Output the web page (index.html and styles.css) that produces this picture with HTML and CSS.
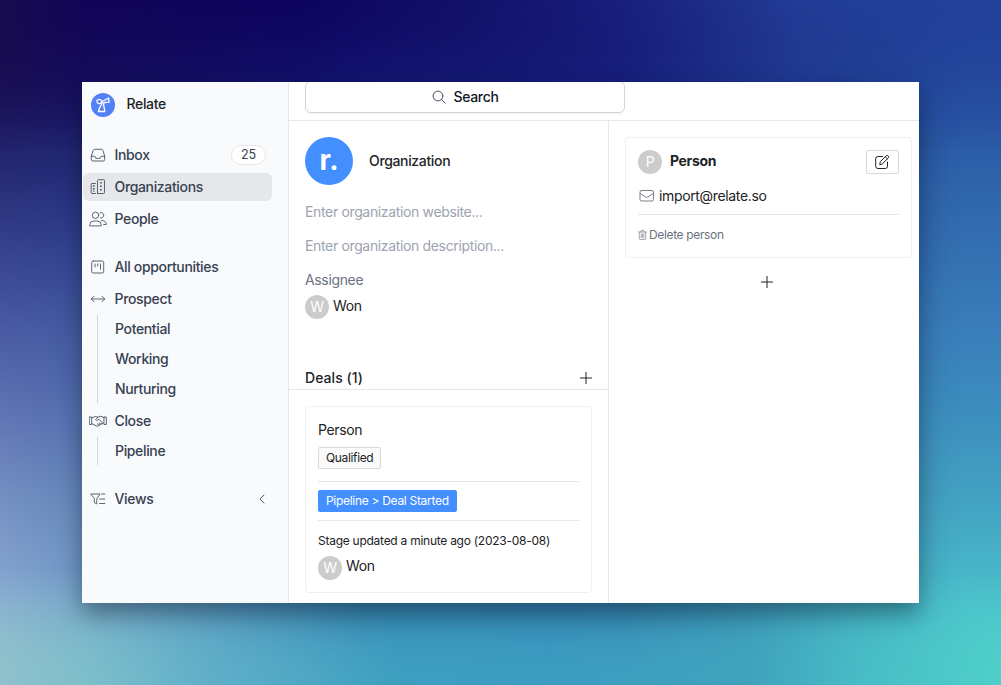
FILE: index.html
```html
<!DOCTYPE html>
<html lang="en">
<head>
<meta charset="utf-8">
<title>Relate</title>
<link rel="stylesheet" href="styles.css">
</head>
<body>
<div class="backdrop"><i class="wash center"></i><i class="wash left"></i><i class="wash top"></i><i class="wash bottom"></i></div>
<div class="window">
  <aside class="sidebar">
    <div class="brand">
      <svg class="brand-logo" viewBox="0 0 24 24"><circle cx="12" cy="12" r="12" fill="#5180f8"/><g fill="none" stroke="#fff" stroke-width="1.35" stroke-linejoin="round" stroke-linecap="round"><path d="M11.300 8.500C10.300 10.200 8.800 11 7.400 10.400 5.700 9.600 5.300 7.700 6.800 6.700c1.500-1 3.200.3 4.500 1.800zM11.300 8.500 17.600 5l.5 4.200-5.200.4M11.300 8.500c.3 3.700-3.500 5.500-3.800 10h6.200c.2-3.700-1.800-5-.8-8.900"/></g></svg>
      <span>Relate</span>
    </div>
    <nav class="nav">
      <div class="group">
        <a class="item"><svg class="icon" viewBox="0 0 18 18"><path d="M2.300 10.300 4 4.600q.4-1.300 1.700-1.300h6.600q1.300 0 1.700 1.300l1.700 5.700v3.200q0 1.500-1.500 1.500H3.800q-1.500 0-1.500-1.500zM2.300 10.300h3.500l1 2h4.400l1-2h3.500"/></svg><span>Inbox</span><span class="count">25</span></a>
        <a class="item active"><svg class="icon" viewBox="0 0 18 18"><path d="M8.500 15.500v-13q0-.8.8-.8h5.400q.8 0 .8.800v12.200q0 .8-.8.800H8.500M6.500 5.500H3q-.8 0-.8.800v8.400q0 .8.800.8h3.500"/><path class="dots" d="M11.900 4v1.600M11.900 7.500v1.600M11.900 11v1.600M4.800 7.300v1.500M4.800 10v1.500M4.800 12.600v1"/></svg><span>Organizations</span></a>
        <a class="item"><svg class="icon" viewBox="0 0 18 18"><circle cx="6.500" cy="5.300" r="3.200"/><path d="M.8 15.500v-1q.2-3.500 4-3.500h3.400q3.800 0 4 3.500v1zM11 2.800a2.700 2.700 0 1 1 .4 5.100M12.500 10.600q4.500-.2 4.700 3.400v.5h-2.500"/></svg><span>People</span></a>
      </div>
      <div class="group">
        <a class="item"><svg class="icon" viewBox="0 0 18 18"><rect x="2.700" y="3" width="12" height="12" rx="1.500"/><path d="M6 6v3M8.700 6v2M11.500 6v5.200"/></svg><span>All opportunities</span></a>
        <a class="item"><svg class="icon" viewBox="0 0 18 18"><path d="M2.300 9h13.400M5 6.300 2.300 9 5 11.700M13 6.300 15.700 9 13 11.700"/></svg><span>Prospect</span></a>
        <div class="sub"><a>Potential</a><a>Working</a><a>Nurturing</a></div>
        <a class="item"><svg class="icon" viewBox="0 0 18 18"><path d="M.7 5h2v7.500h-2zM15.300 5h2v7.500h-2zM2.700 6l3.500-1.500 2.800.7 2.800-1 3.500 1.500M2.700 11.500 7 13.800q1 .7 2 .2l5.200-3M9 5.200 6.500 7.700q.7 1.300 2.300.3l1.200-.6 3.500 3.300q-.2 1.500-1.700 1.300M10 11l1.500 1.200M8.500 12l1.700 1.200"/></svg><span>Close</span></a>
        <div class="sub"><a>Pipeline</a></div>
      </div>
      <div class="group">
        <a class="item"><svg class="icon" viewBox="0 0 18 18"><path d="M2 4h9L7.800 8.700V14L5.300 12.500V8.700zM12.300 4h3.500M10.700 9h5.100M10.700 13.500h5.100"/></svg><span>Views</span><svg class="chevron" viewBox="0 0 10 10"><path d="M7 1 3 5l4 4"/></svg></a>
      </div>
    </nav>
  </aside>
  <main class="main">
    <header class="topbar">
      <button class="search"><svg class="search-icon" viewBox="0 0 14 14"><circle cx="6" cy="6" r="4.900"/><path d="m9.500 9.500 3.700 3.700"/></svg>Search</button>
    </header>
    <div class="columns">
      <section class="organization">
        <div class="org-head"><div class="org-avatar">r.</div><span>Organization</span></div>
        <div class="field placeholder">Enter organization website...</div>
        <div class="field placeholder">Enter organization description...</div>
        <div class="field label">Assignee</div>
        <div class="person"><span class="avatar">W</span><span>Won</span></div>
        <div class="deals-head"><span>Deals (1)</span><svg class="plus" viewBox="0 0 12 12"><path d="M6 0v12M0 6h12"/></svg></div>
        <article class="card deal">
          <div class="deal-name">Person</div>
          <span class="tag">Qualified</span>
          <div class="stage"><span class="tag blue">Pipeline &gt; Deal Started</span></div>
          <div class="updated">Stage updated a minute ago (2023-08-08)</div>
          <div class="person"><span class="avatar">W</span><span>Won</span></div>
        </article>
      </section>
      <section class="contacts">
        <article class="card contact">
          <div class="contact-head"><span class="avatar">P</span><b>Person</b><button class="edit"><svg viewBox="0 0 16 16"><path d="M8.500 2.500H4Q1.700 2.500 1.700 4.800v7.400q0 2.300 2.300 2.300h7.200q2.300 0 2.300-2.300V8M5.800 10.300l.5-2.600 6-6q.8-.7 1.600 0l.5.5q.7.800 0 1.600l-6 6zM11.300 2.700l2.100 2.100"/></svg></button></div>
          <div class="email"><svg class="mail" viewBox="0 0 16 14"><rect x="1" y="1.500" width="13.500" height="10.500" rx="1.500"/><path d="M1.200 4.500 6.800 8q1 .6 2 0l5.500-3.500"/></svg><span>import@relate.so</span></div>
          <div class="delete"><svg class="trash" viewBox="0 0 9 10"><path d="M.3 2h8.400M3 1.800V.6h3v1.200M1.300 2.200v6.500q0 .8.800.8h4.800q.8 0 .8-.8V2.200M3.100 3.800v4M4.500 3.800v4M5.900 3.800v4"/></svg><span>Delete person</span></div>
        </article>
        <div class="add"><svg class="plus" viewBox="0 0 12 12"><path d="M6 0v12M0 6h12"/></svg></div>
      </section>
    </div>
  </main>
</div>
</body>
</html>
```
FILE: styles.css
```css
* { box-sizing: border-box; }
body {
  margin: 0;
  height: 685px;
  padding: 82px;
  overflow: hidden;
  font: 14px/22px Inter, "Liberation Sans", sans-serif;
  letter-spacing: -.35px;
  color: #222326;
}
svg { display: block; flex: none; fill: none; stroke: currentColor; stroke-width: .9; stroke-linecap: round; stroke-linejoin: round; }
button { font: inherit; letter-spacing: inherit; color: inherit; background: #fff; }

/* Desktop colour mesh */
.backdrop {
  position: absolute;
  inset: 0;
  background: linear-gradient(#23409a, #254fa0 12%, #3067ac 29%, #3a80bb 50%, #3b8bbd 58%, #43a2c2 73%, #4abecb 88%, #4ecfca);
}
.wash { position: absolute; inset: 0; }
.center {
  background: linear-gradient(#12126b, #16217d 13%, #2a5b9c 50%, #3076a8 90%, #3b98be);
  mask-image: linear-gradient(90deg, #000 62%, transparent 96%);
}
.left {
  background: linear-gradient(#170a4e, #1b1257 12%, #232670 23%, #36418c 36%, #4a5ba3 48%, #6175b5 61%, #7590c2 73%, #88a8d2 87%, #92c4cf);
  mask-image: linear-gradient(90deg, #000, transparent 36%);
}
.top {
  background: linear-gradient(90deg, #180c50, #120558 8%, #0d0460 30%, #12126b 48%, #191f7d 62%, #223d96 80%, #23429a);
  mask-image: linear-gradient(#000, transparent 22%);
}
.bottom {
  background: linear-gradient(90deg, #8fc0cc, #7dbecb 9%, #62b0c9 20%, #3d9fc0 40%, #3c9dc2 55%, #40a2bc 75%, #48bcc6 86%, #4ecfca);
  mask-image: linear-gradient(0deg, #000, #000c 5%, transparent 17%);
}

.window {
  position: relative;
  display: flex;
  width: 837px;
  height: 521px;
  overflow: hidden;
  background: #fff;
  box-shadow: 0 10px 22px rgba(0, 10, 20, .4);
}
.sidebar {
  width: 207px;
  flex: none;
  border-right: 1px solid #e5e7eb;
  background: #f9fafc;
  font-weight: 500;
  color: #374151;
}
.brand { display: flex; align-items: center; gap: 11.500px; height: 45px; padding-left: 9px; color: #222326; }
.brand span { margin-top: -1px; }
.brand-logo { width: 24px; height: 24px; stroke: none; }
.nav { display: flex; flex-direction: column; gap: 20px; padding: 14px 16px 0 1px; }
.item { display: flex; align-items: center; height: 28px; padding: 0 6px; border-radius: 6px; }
.item + .item { margin-top: 4px; }
.item.active { background: #e5e7eb; }
.icon { width: 18px; height: 18px; margin-right: 7.500px; color: #4b5563; }
.dots { stroke-width: 1.600; stroke-linecap: butt; }
.count {
  width: 35px;
  height: 20px;
  margin-left: auto;
  border: 1px solid #e5e7eb;
  border-radius: 10px;
  background: #fff;
  font-size: 12.500px;
  letter-spacing: 0;
  line-height: 18px;
  text-align: center;
  font-weight: 400;
}
.chevron { width: 10px; height: 10px; margin: 0 -1px 0 auto; }
.sub { display: flex; flex-direction: column; gap: 2px; margin: 2px 0 4px 14px; padding-left: 17px; border-left: 1px solid #d1d5db; line-height: 28px; }
.nav .sub:last-child { margin-bottom: 0; }

.main { display: flex; flex-direction: column; flex: 1; }
.topbar { height: 39px; flex: none; border-bottom: 1px solid #e5e7eb; padding-left: 16px; }
.search {
  display: flex;
  align-items: center;
  justify-content: center;
  gap: 8px;
  width: 320px;
  height: 32px;
  margin-top: -1px;
  padding: 0;
  border: 1px solid #d1d5db;
  border-radius: 6px;
  box-shadow: 0 1px 2px rgba(0, 0, 0, .05);
  font-weight: 500;
  color: #111827;
}
.search-icon { width: 14px; height: 14px; color: #374151; }
.columns { display: flex; flex: 1; }
.organization { width: 320px; flex: none; padding-top: 16px; border-right: 1px solid #e5e7eb; }
.org-head { display: flex; align-items: center; gap: 16px; padding-left: 16px; margin-bottom: 16px; font-weight: 500; }
.org-avatar { width: 48px; height: 48px; border-radius: 50%; background: #448fff; color: #fff; font: 700 28px/46px Inter, sans-serif; letter-spacing: 0; text-align: center; }
.field { padding-left: 16px; margin-bottom: 12px; }
.placeholder { color: #9ca3af; }
.label { margin-bottom: 4px; color: #6b7280; }
.person { display: flex; gap: 4px; }
.organization > .person { padding-left: 16px; }
.avatar { width: 24px; height: 24px; flex: none; border-radius: 50%; background: #ccc; color: #fff; line-height: 24px; text-align: center; }
.deals-head { display: flex; align-items: center; justify-content: space-between; margin-top: 48px; padding: 0 16px; height: 23px; border-bottom: 1px solid #e5e7eb; font-weight: 500; letter-spacing: .05px; }
.plus { width: 12px; height: 12px; stroke-linecap: butt; stroke-width: 1; }
.card { width: 287px; border: 1px solid #f0f0f0; border-radius: 4px; padding: 12px; }
.deal { height: 187px; margin: 16px 0 0 16px; }
.deal-name { margin-bottom: 6px; }
.tag { display: block; width: max-content; height: 22px; padding: 0 7px; border: 1px solid #d9d9d9; border-radius: 2px; background: #fafafa; font-size: 12px; line-height: 20px; }
.blue { border-color: #448fff; background: #448fff; color: #fff; letter-spacing: -.3px; }
.stage { margin: 12px 0 9px; padding: 8px 0; border: solid #e5e7eb; border-width: 1px 0; }
.updated { margin-bottom: 4px; font-size: 12px; letter-spacing: -.26px; }
.deal .person span + span { margin-top: -1px; }
.contacts { flex: 1; padding: 16px 0 0 16px; }
.contact { height: 121px; }
.contact-head { display: flex; gap: 8px; margin-bottom: 11px; }
.contact-head b { font-weight: 700; }
.edit { display: grid; place-items: center; width: 33px; height: 24px; margin-left: auto; padding: 0 2px 0 0; border: 1px solid #d9d9d9; border-radius: 2px; }
.edit svg { width: 16px; height: 16px; stroke-width: 1; }
.email { display: flex; align-items: center; gap: 4px; height: 30px; padding: 0 0 7px 1px; border-bottom: 1px solid #e5e7eb; }
.mail { width: 16px; height: 14px; color: #6b7280; }
.delete { display: flex; align-items: center; gap: 2px; margin-top: 9px; font-size: 12px; color: #6b7280; }
.trash { width: 9px; height: 10px; stroke-width: .6; }
.add { display: flex; justify-content: center; width: 283px; margin-top: 18px; }
```
